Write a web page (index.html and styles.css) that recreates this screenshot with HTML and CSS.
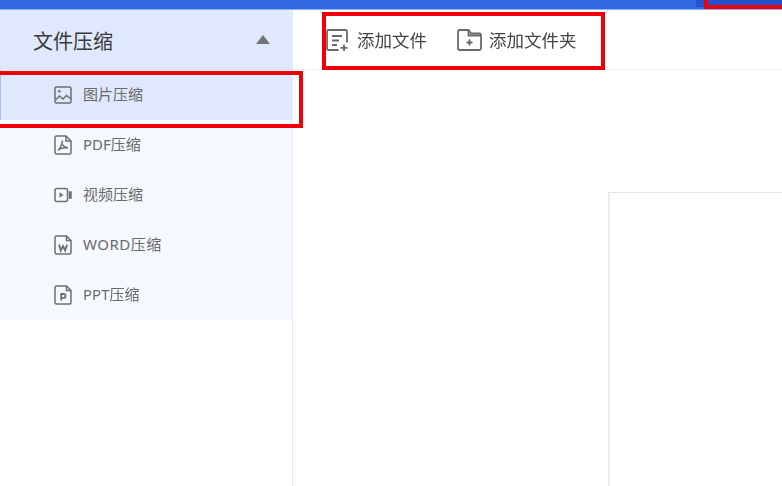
FILE: index.html
```html
<!DOCTYPE html>
<html lang="zh-CN">
<head>
<meta charset="utf-8">
<title>文件压缩</title>
<link rel="stylesheet" href="styles.css">
</head>
<body>
<div class="app">
  <header class="topbar"><span class="topbar-end"></span></header>
  <div class="main">
    <aside class="sidebar">
      <div class="group-head">
        <span class="group-title">文件压缩</span>
        <span class="caret"></span>
      </div>
      <nav class="menu">
        <a class="menu-item active">
          <svg class="icon" viewBox="0 0 18 20"><rect x="1" y="2" width="16" height="16" rx="1.500"/><circle cx="5.300" cy="6.300" r="1.300" class="solid"/><path d="M1.500 15l4-4 3.500 3 3.500-3.500 4.500 3.500"/></svg>
          <span class="label">图片压缩</span>
        </a>
        <a class="menu-item">
          <svg class="icon" viewBox="0 0 18 20"><path d="M2.500 1h9.500l5 5v11.500a1.500 1.500 0 0 1-1.500 1.500h-13a1.500 1.500 0 0 1-1.500-1.500v-15a1.500 1.500 0 0 1 1.500-1.500z"/><path d="M12 1v5h5"/><path d="M8.500 5.500c-.5 4-2 7.500-4.500 10M8.500 9.500c1 2 2.500 3 5.500 3.500M4.500 14.500c3-1.500 6-2 9.500-1.500"/></svg>
          <span class="label">PDF压缩</span>
        </a>
        <a class="menu-item">
          <svg class="icon" viewBox="0 0 18 20"><rect x="1" y="3.500" width="12.500" height="13" rx="2"/><path d="M15.500 7v6h1.500v-6z"/><path d="M5.500 7.300l4 2.700-4 2.700z" class="solid"/></svg>
          <span class="label">视频压缩</span>
        </a>
        <a class="menu-item">
          <svg class="icon" viewBox="0 0 18 20"><path d="M2.500 1h10l4.500 4.500v12a1.500 1.500 0 0 1-1.500 1.500h-13a1.500 1.500 0 0 1-1.500-1.500v-15a1.500 1.500 0 0 1 1.500-1.500z"/><path d="M12.500 1v4.500h4.500"/><path d="M5 9.500l1.800 6 2.200-4.500 2.200 4.500 1.800-6" class="bold"/></svg>
          <span class="label label-wide">WORD压缩</span>
        </a>
        <a class="menu-item">
          <svg class="icon" viewBox="0 0 18 20"><path d="M2.500 1h10l4.500 4.500v12a1.500 1.500 0 0 1-1.500 1.500h-13a1.500 1.500 0 0 1-1.500-1.500v-15a1.500 1.500 0 0 1 1.500-1.500z"/><path d="M12.500 1v4.500h4.500"/><path d="M7.200 15.500v-6.500h2.400a1.900 1.900 0 0 1 0 3.900h-2.400" class="bold"/></svg>
          <span class="label">PPT压缩</span>
        </a>
      </nav>
    </aside>
    <section class="content">
      <div class="toolbar">
        <button class="tool">
          <svg class="tool-icon" viewBox="0 0 24 24"><path d="M13.500 22h-10a1.500 1.500 0 0 1-1.500-1.500v-17a1.500 1.500 0 0 1 1.500-1.500h17a1.500 1.500 0 0 1 1.500 1.500v11"/><path d="M7 8h10M7 12.500h7M7 17h5"/><path d="M19 16.500v6.500M15.500 19.800h7"/></svg>
          <span>添加文件</span>
        </button>
        <button class="tool">
          <svg class="tool-icon tool-icon-wide" viewBox="0 0 25 24"><path d="M1 20.500v-17a1.500 1.500 0 0 1 1.500-1.500h9l2.500 3.500h8.500a1.500 1.500 0 0 1 1.500 1.500v13.500a1.500 1.500 0 0 1-1.500 1.500h-20a1.500 1.500 0 0 1-1.500-1.500z"/><path d="M11.500 2v5.500h12.500"/><path d="M12.500 11.500v6M9.500 14.500h6"/></svg>
          <span>添加文件夹</span>
        </button>
      </div>
      <div class="canvas"><div class="preview"></div></div>
    </section>
  </div>
  <div class="mark mark-menu"></div>
  <div class="mark mark-toolbar"></div>
  <div class="mark mark-top"></div>
</div>
</body>
</html>
```
FILE: styles.css
```css
* { box-sizing: border-box; }
html, body { margin: 0; height: 100%; overflow: hidden; background: #fff; }
body { font-family: "Noto Sans", "Noto Sans CJK SC", sans-serif; }
.app { position: relative; width: 782px; height: 486px; display: flex; flex-direction: column; overflow: hidden; filter: blur(0.45px); }
.topbar { height: 10px; flex: none; background: #3068e2; position: relative; border-bottom: 1px solid #8fb0ef; }
.topbar-end { position: absolute; left: 696px; top: 0; width: 86px; height: 7px; background: #2452cc; }
.main { flex: 1; display: flex; min-height: 0; }
.sidebar { width: 293px; flex: none; border-right: 1px solid #e4eafa; }
.group-head { height: 60px; background: #dfe8fc; display: flex; align-items: center; justify-content: space-between; padding: 0 22px 0 33px; }
.group-title { font-size: 20px; color: #3a3a3a; line-height: 1; margin-top: 4px; }
.caret { width: 0; height: 0; border-left: 7px solid transparent; border-right: 7px solid transparent; border-bottom: 9px solid #747474; margin-top: -2px; }
.menu { background: #f4f8ff; }
.menu-item { height: 50px; display: flex; align-items: center; padding-left: 54px; gap: 11px; font-size: 15px; color: #6a6a6a; }
.menu-item.active { background: #dfe8fc; border-left: 1px solid #a9c0f0; padding-left: 53px; }
.label { margin-bottom: 3px; }
.label-wide { letter-spacing: 0.500px; }
.icon { width: 18px; height: 20px; flex: none; fill: none; stroke: #6e6e6e; stroke-width: 1.500; }
.icon .solid { fill: #6e6e6e; stroke: none; }
.icon .bold { stroke-width: 1.800; }
.content { flex: 1; display: flex; flex-direction: column; min-width: 0; }
.toolbar { height: 60px; flex: none; display: flex; align-items: center; padding-left: 32px; gap: 30px; border-bottom: 1px solid #eef1f6; }
.tool { display: flex; align-items: center; gap: 8px; padding: 0; border: 0; background: none; font: inherit; font-size: 17.500px; color: #444; }
.tool-icon { width: 24px; height: 24px; flex: none; fill: none; stroke: #6a6a6a; stroke-width: 1.800; }
.tool-icon-wide { width: 25px; margin-right: -1px; }
.canvas { flex: 1; padding: 122px 0 0 315px; min-height: 0; }
.preview { height: 100%; border-left: 2px solid #ececec; border-top: 1px solid #e6e6e6; }
.mark { position: absolute; border: 4px solid #ee0008; }
.mark-menu { left: -6px; top: 71px; width: 309px; height: 57px; }
.mark-toolbar { left: 322px; top: 12px; width: 283px; height: 58px; }
.mark-top { left: 704px; top: -10px; width: 90px; height: 19px; }
```
